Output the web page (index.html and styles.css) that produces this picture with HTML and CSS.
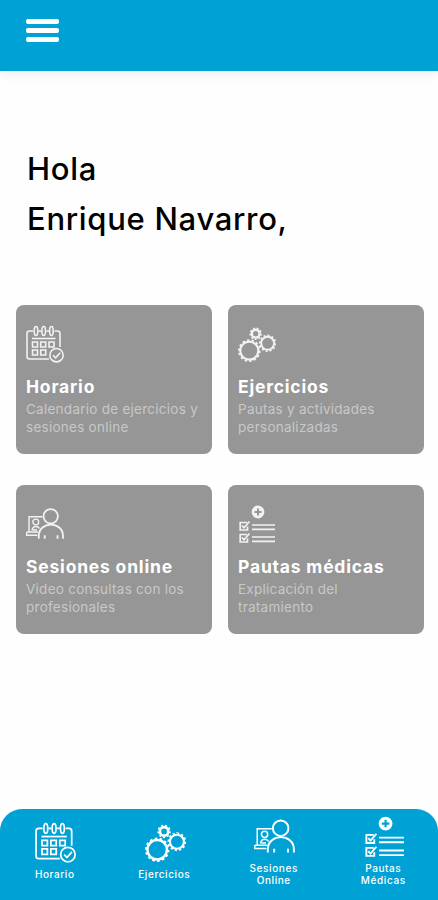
FILE: index.html
```html
<!DOCTYPE html>
<html lang="es">
<head>
  <meta charset="UTF-8" />
  <meta name="viewport" content="width=device-width, initial-scale=1" />
  <title>Inicio</title>
  <link rel="stylesheet" href="styles.css">
</head>
<body>
  <!-- Iconos compartidos por las tarjetas y la barra inferior -->
  <svg class="sprite" aria-hidden="true">
    <symbol id="icon-horario" viewBox="0 0 38 38">
      <g fill="none" stroke="currentColor" stroke-width="1.6">
        <path d="M7 6H3.5Q1 6 1 8.5V31.500Q1 34 3.500 34H23M28.500 6H31.500Q34 6 34 8.500V22M12.500 6H15M20.500 6H23" />
        <ellipse cx="10" cy="6" rx="1.800" ry="4.500" />
        <ellipse cx="17.700" cy="6" rx="1.800" ry="4.500" />
        <ellipse cx="25.400" cy="6" rx="1.800" ry="4.500" />
        <path d="M6 13.500H29.500" />
        <path d="M6.500 17h5v5h-5zM14.700 17h5v5h-5zM23 17h5v5h-5zM6.500 25h5v5h-5zM14.700 25h5v5h-5z" />
        <circle cx="30.500" cy="30.200" r="6.700" />
        <path d="M27 30.300l2.600 2.600 4.600-5.200" />
      </g>
    </symbol>
    <symbol id="icon-ejercicios" viewBox="0 0 38 38">
      <g fill="none" stroke="currentColor">
        <circle cx="11.300" cy="25.700" r="9" stroke-width="2.2" />
        <circle cx="11.300" cy="25.700" r="10.500" stroke-width="1.700" pathLength="28" stroke-dasharray="1 1" />
        <circle cx="29.600" cy="18.300" r="6.500" stroke-width="2" />
        <circle cx="29.600" cy="18.300" r="7.900" stroke-width="1.600" pathLength="24" stroke-dasharray="1 1" />
        <circle cx="17.700" cy="8.700" r="3.900" stroke-width="2.500" />
        <circle cx="17.700" cy="8.700" r="5.500" stroke-width="1.500" pathLength="18" stroke-dasharray="1 1" />
      </g>
    </symbol>
    <symbol id="icon-sesiones" viewBox="0 0 38 38">
      <g fill="none" stroke="currentColor" stroke-width="1.800">
        <circle cx="24.700" cy="11.300" r="7.200" />
        <path d="M12.800 33.800V31C12.800 15.800 37 15.800 37 31V33.800M18.700 30.300V33.800M31.500 30.300V33.800" />
        <g stroke-width="1.400">
          <path d="M16.500 11.800H3V26.300M.7 27H12.300M.7 27V30.200H11.500" />
          <circle cx="9.800" cy="17" r="2.900" />
          <path d="M6 25.500Q6.500 21.500 9.800 21.500Q12.500 21.500 13.500 23.500M7 25h4" />
        </g>
      </g>
    </symbol>
    <symbol id="icon-pautas" viewBox="0 0 38 38">
      <path fill="currentColor" fill-rule="evenodd" d="M20 .6a6.400 6.400 0 1 1 0 12.800a6.400 6.400 0 1 1 0-12.800zM19 3.500V6H16.500V8H19V10.500H21V8H23.500V6H21V3.500z" />
      <g fill="none" stroke="currentColor" stroke-width="1.700">
        <path d="M9 17.500H2.200V25H9.500V21.500M4 20.500l2 2.300L11.500 16.500" />
        <path d="M9 29.500H2.200V37H9.500V33.500M4 32.500l2 2.300L11.500 28.500" />
        <path d="M14 20H37M14 24.300H37M14 32H37M14 36.300H37" />
      </g>
    </symbol>
  </svg>

  <header>
    <button class="menu-button" aria-label="Menú">
      <span></span>
      <span></span>
      <span></span>
    </button>
  </header>

  <main>
    <h1 class="greeting">Hola<br>Enrique Navarro,</h1>

    <section class="cards">
      <a class="card" href="#">
        <svg class="card-icon"><use href="#icon-horario" /></svg>
        <h2>Horario</h2>
        <p>Calendario de ejercicios y<br>sesiones online</p>
      </a>
      <a class="card" href="#">
        <svg class="card-icon"><use href="#icon-ejercicios" /></svg>
        <h2>Ejercicios</h2>
        <p>Pautas y actividades<br>personalizadas</p>
      </a>
      <a class="card" href="#">
        <svg class="card-icon"><use href="#icon-sesiones" /></svg>
        <h2>Sesiones online</h2>
        <p>Video consultas con los<br>profesionales</p>
      </a>
      <a class="card" href="#">
        <svg class="card-icon"><use href="#icon-pautas" /></svg>
        <h2>Pautas médicas</h2>
        <p>Explicación del<br>tratamiento</p>
      </a>
    </section>
  </main>

  <nav class="tab-bar">
    <a href="#">
      <svg class="tab-icon"><use href="#icon-horario" /></svg>
      <span>Horario</span>
    </a>
    <a href="#">
      <svg class="tab-icon"><use href="#icon-ejercicios" /></svg>
      <span>Ejercicios</span>
    </a>
    <a href="#">
      <svg class="tab-icon"><use href="#icon-sesiones" /></svg>
      <span>Sesiones<br>Online</span>
    </a>
    <a href="#">
      <svg class="tab-icon"><use href="#icon-pautas" /></svg>
      <span>Pautas<br>Médicas</span>
    </a>
  </nav>
</body>
</html>
```
FILE: styles.css
```css
:root {
  --blue: #00a2d5;
  --card-bg: #969696;
}

* {
  box-sizing: border-box;
}

body {
  margin: 0;
  min-height: 100vh;
  display: flex;
  flex-direction: column;
  background: #fefefe;
  font-family: Inter, "Open Sans", sans-serif;
  color: #000;
}

.sprite {
  display: none;
}

a {
  color: inherit;
  text-decoration: none;
}

header {
  height: 71px;
  padding: 19px 26px;
  background: var(--blue);
  box-shadow: 0 2px 12px rgba(0, 0, 0, 0.08);
}

.menu-button {
  display: flex;
  flex-direction: column;
  gap: 4px;
  width: 33px;
  padding: 0;
  border: none;
  background: none;
  cursor: pointer;
}

.menu-button span {
  height: 5px;
  border-radius: 2px;
  background: #fff;
}

main {
  flex: 1;
  padding: 73px 14px 0 16px;
}

.greeting {
  margin: 0 0 61px;
  padding-left: 11px;
  font-size: 31px;
  font-weight: 450;
  line-height: 50px;
  letter-spacing: 0.7px;
}

.cards {
  display: grid;
  grid-template-columns: 196px 196px;
  gap: 31px 16px;
}

.card {
  height: 149px;
  padding: 20px 10px 0;
  border-radius: 8px;
  background: var(--card-bg);
  color: #fff;
}

.card-icon {
  display: block;
  width: 38px;
  height: 38px;
  color: #f2f2f2;
}

.card h2 {
  margin: 12px 0 1px;
  font-size: 17.5px;
  font-weight: 700;
  line-height: 24px;
  letter-spacing: 0.8px;
  white-space: nowrap;
}

.card p {
  margin: 0;
  font-size: 13.5px;
  line-height: 18px;
  letter-spacing: 0.26px;
  white-space: nowrap;
  color: #c8c8c8;
}

.tab-bar {
  display: grid;
  grid-template-columns: repeat(4, 1fr);
  height: 91px;
  padding-bottom: 7px;
  border-radius: 22px 22px 0 0;
  background: var(--blue);
  color: #fff;
}

.tab-bar a {
  display: flex;
  flex-direction: column;
  align-items: center;
  justify-content: center;
  font-size: 10px;
  font-weight: 500;
  line-height: 12.5px;
  letter-spacing: 0.6px;
  text-align: center;
}

.tab-icon {
  width: 41px;
  height: 41px;
  margin: 0 0 5px 2px;
}
```
